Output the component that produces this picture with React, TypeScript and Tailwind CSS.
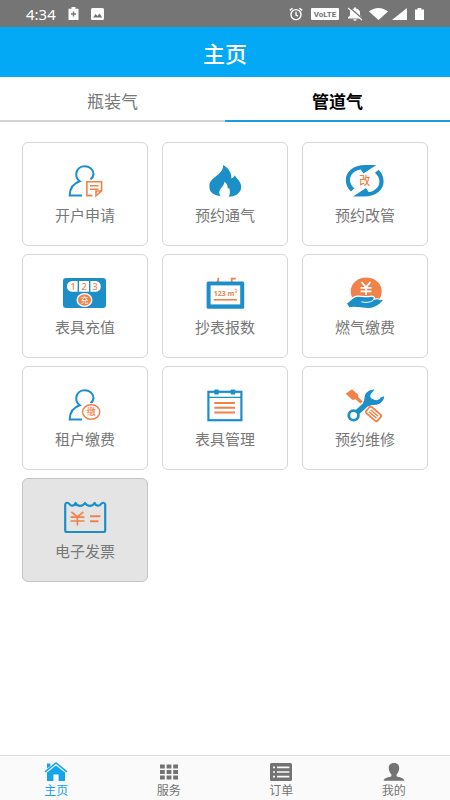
import { useState } from "react";
import type { ReactNode } from "react";

const BLUE = "#1c8fc9";
const ORANGE = "#f0824a";
const CJK = '"Noto Sans CJK SC", sans-serif';

function Icon({ children }: { children: ReactNode }) {
   return (
      <svg viewBox="0 0 48 36" className="h-9 w-12" fill="none" aria-hidden="true">
         {children}
      </svg>
   );
}

function Person() {
   return (
      <path
         d="M21 32.5H8.7C8.8 25 12 20.5 18.8 18.3C15.6 16.2 14.9 12.6 15.4 9.8C16.2 5.8 19.6 3.3 23.7 3.3C28.6 3.3 32.4 6.5 32.5 10.6C32.5 13 31.5 15 29.5 16.4"
         stroke={BLUE}
         strokeWidth="2"
      />
   );
}

function OpenAccountIcon() {
   return (
      <Icon>
         <Person />
         <path d="M31.5 32.6H25.9V18.8H40.6V28L35 32.8V28H40.4" stroke={ORANGE} strokeWidth="1.6" />
         <path d="M29 22.7H37.5M29 26.2H37.5" stroke={ORANGE} strokeWidth="1.4" />
      </Icon>
   );
}

function FlameIcon() {
   return (
      <Icon>
         <path
            d="M22 2C26.5 4.4 30.8 9 30.4 15.4C32 15 33.2 13.8 33.8 12.2C35.4 16 40.2 18 40.2 24C40.2 29.2 35.6 33.4 28 33.8C8 33.8 8.4 26 8.4 22.7C8.4 14 22.8 12 22 2Z"
            fill={BLUE}
         />
         <path
            d="M23.4 18.8C26 20.8 27 23.4 26.8 25.8L28.2 25C29.4 28.4 29.2 31.4 27.4 34.4H20.4C18.8 32.8 18 30.8 18.4 28.6C18.8 25.4 23.4 22.8 23.4 18.8Z"
            fill="#fff"
         />
      </Icon>
   );
}

function ChangePipeIcon() {
   const arrow = "M35.4 2H24.4C12 2 4.8 8.8 4.8 17C4.8 21.6 6.6 25.4 9.8 28.6L13.4 25.6C10.6 23 9 20.2 9 17C9 11.4 13.4 7.2 19.8 6.4L22.4 10.4Z";
   return (
      <Icon>
         <path d={arrow} fill={BLUE} />
         <path d={arrow} fill={BLUE} transform="rotate(180 23.7 17.7)" />
         <text x="23.7" y="21.8" textAnchor="middle" fontSize="11" fontWeight="500" fill={ORANGE} fontFamily={CJK}>改</text>
      </Icon>
   );
}

function MeterTopUpIcon() {
   return (
      <Icon>
         <rect x="2" y="3" width="43" height="30" rx="3" fill={BLUE} />
         <path d="M11.3 6H16.6V16.8H11.3A5.4 5.4 0 0 1 11.3 6ZM18 6H28V16.8H18ZM29.4 6H34.4A5.4 5.4 0 0 1 34.4 16.8H29.4Z" fill="#fff" />
         <g fill={ORANGE} fontFamily='"Noto Sans", sans-serif' fontSize="9" fontWeight="500" textAnchor="middle">
            <text x="12" y="14.6">1</text>
            <text x="23" y="14.6">2</text>
            <text x="34" y="14.6">3</text>
         </g>
         <ellipse cx="23.5" cy="25" rx="8" ry="7" fill="#fff" />
         <ellipse cx="23.5" cy="25" rx="6.6" ry="5.7" fill={ORANGE} />
         <text x="23.5" y="28.1" textAnchor="middle" fontSize="8" fill="#fff" fontFamily={CJK}>充</text>
      </Icon>
   );
}

function ReadingIcon() {
   return (
      <Icon>
         <path d="M15.7 6.5H17.3V2.7M30.7 7V3.6H34.8" stroke={ORANGE} strokeWidth="1.8" />
         <rect x="5.6" y="6.4" width="37.6" height="27.4" rx="1.5" fill={BLUE} />
         <rect x="9.6" y="10.4" width="29.6" height="19" fill="#fff" />
         <text x="24.4" y="21" textAnchor="middle" fontSize="7" fontWeight="700" fill={ORANGE} fontFamily='"Noto Sans", sans-serif'>123 m³</text>
         <path d="M12.7 24.8H36" stroke={ORANGE} strokeWidth="1.6" />
      </Icon>
   );
}

function GasPayIcon() {
   return (
      <Icon>
         <ellipse cx="25.2" cy="16.4" rx="15.5" ry="14" fill={ORANGE} />
         <path d="M20.5 7L25 12.3L29.5 7M19.5 12.8H30.5M19.5 16.4H30.5M25 12V20" stroke="#fff" strokeWidth="1.8" />
         <path
            d="M5.2 28.2C9 26.6 11 21.2 16.8 21.2C21 21.2 25 22.2 29 21.3C32 20.7 34.2 22 33 24.2C36 23.4 38 23.8 39 24.6C40.8 23.8 43 24.4 42.2 26C38 30.6 34 33.6 28 33.6C20 33.8 14.6 31 8 33Z"
            fill={BLUE}
            stroke="#fff"
            strokeWidth="1.2"
         />
         <path d="M20.5 26.8C25 28 31 27.4 33.2 24.2" stroke="#fff" strokeWidth="1" />
      </Icon>
   );
}

function TenantPayIcon() {
   return (
      <Icon>
         <Person />
         <ellipse cx="30.2" cy="25" rx="10.2" ry="8.8" fill="#fff" />
         <ellipse cx="30.2" cy="25" rx="8.6" ry="7.2" stroke={ORANGE} strokeWidth="1.4" />
         <text x="30.2" y="28.3" textAnchor="middle" fontSize="9" fontWeight="500" fill={ORANGE} fontFamily={CJK}>缴</text>
      </Icon>
   );
}

function MeterManageIcon() {
   return (
      <Icon>
         <rect x="7.4" y="4.8" width="33" height="28.4" stroke={BLUE} strokeWidth="2.2" />
         <path d="M7 10.4H41" stroke={BLUE} strokeWidth="1.2" />
         <rect x="13.2" y="2.6" width="4.6" height="5" rx="1" fill={BLUE} />
         <rect x="29.6" y="2.6" width="4.6" height="5" rx="1" fill={BLUE} />
         <path d="M13.3 16H34M13.3 20.8H34M13.3 25.6H34" stroke={ORANGE} strokeWidth="2" />
      </Icon>
   );
}

function RepairIcon() {
   return (
      <Icon>
         <path d="M4.6 6.8L11 2.2L17.6 8L17 10L21.8 14.4L19.4 16.4L14.4 12.2L11.6 13Z" fill={ORANGE} />
         <path d="M16 25.4L27 15.4" stroke={BLUE} strokeWidth="5.4" />
         <circle cx="12.6" cy="28.4" r="4.8" stroke={BLUE} strokeWidth="2.8" />
         <path
            d="M33.6 2.4C28.6 2.2 23.8 5.4 23.6 10C23.6 12 23.2 14 22 15.4L27.8 19.6C29 18.4 31 18 33 18C38.8 17.8 43.2 14 43.2 9.2L39.6 10.4C38.4 13 35.6 13.6 33.4 12.8C29.6 12 28.4 9.4 30 6.8Z"
            fill={BLUE}
         />
         <g transform="rotate(40 32.6 27)" stroke={ORANGE}>
            <rect x="25" y="22.9" width="15" height="8.2" rx="2" strokeWidth="1.8" />
            <path d="M27.5 25.8H37.5M27.5 28.3H37.5" strokeWidth="1.4" />
         </g>
      </Icon>
   );
}

function InvoiceIcon() {
   return (
      <Icon>
         <path
            d="M4.2 5.4C4.6 3.4 7 3.2 8.4 5C10 7.4 13.2 7.4 14.6 4C16.4 7.8 21.6 7.8 24 4C26.4 7.8 31.4 7.8 33.6 4C35 7.4 38.4 7.4 40 5C41.4 3.2 43.8 3.4 44.2 5.4V31.2Q44.2 33 42.4 33H6Q4.2 33 4.2 31.2Z"
            stroke={BLUE}
            strokeWidth="2.2"
            strokeLinejoin="round"
         />
         <path d="M10.4 12.8L16.4 18L22.4 12.8M9.5 18.2H23.5M9.5 22H23.5M16.4 17.5V26.4" stroke={ORANGE} strokeWidth="1.7" />
         <path d="M29 17.2H39.4M29 22.2H37.4" stroke={ORANGE} strokeWidth="2" />
      </Icon>
   );
}

const services = [
   { name: "开户申请", icon: <OpenAccountIcon /> },
   { name: "预约通气", icon: <FlameIcon /> },
   { name: "预约改管", icon: <ChangePipeIcon /> },
   { name: "表具充值", icon: <MeterTopUpIcon /> },
   { name: "抄表报数", icon: <ReadingIcon /> },
   { name: "燃气缴费", icon: <GasPayIcon /> },
   { name: "租户缴费", icon: <TenantPayIcon /> },
   { name: "表具管理", icon: <MeterManageIcon /> },
   { name: "预约维修", icon: <RepairIcon /> },
   { name: "电子发票", icon: <InvoiceIcon />, pressed: true },
];

const navItems = [
   {
      name: "主页",
      icon: (
         <>
            <path d="M1 9.8L12 1L23 9.8" stroke="currentColor" strokeWidth="1.6" fill="none" />
            <path d="M3 1.6H6.4V4L3 6.6ZM12 3.4L21 10.6V19H14.6V12.6H9.4V19H3V10.6Z" />
         </>
      ),
   },
   {
      name: "服务",
      icon: (
         <path d="M3 2.4H7.8V6.4H3ZM9.6 2.4H14.4V6.4H9.6ZM16.2 2.4H21V6.4H16.2ZM3 8H7.8V12H3ZM9.6 8H14.4V12H9.6ZM16.2 8H21V12H16.2ZM3 13.6H7.8V17.6H3ZM9.6 13.6H14.4V17.6H9.6ZM16.2 13.6H21V17.6H16.2Z" />
      ),
   },
   {
      name: "订单",
      icon: (
         <>
            <rect x="1" y="1" width="22" height="18" rx="1.5" />
            <path d="M4 5.4H6M8 5.4H20.4M4 10H6M8 10H20.4M4 14.6H6M8 14.6H20.4" stroke="#fafafa" strokeWidth="1.6" />
         </>
      ),
   },
   {
      name: "我的",
      icon: (
         <path d="M12 1C15.8 1 17.4 3.2 17.2 6.6C17 9 16 11 14.6 12.4V14.2C17 15.4 22 15.2 22.4 18.8H1.6C2 15.2 7 15.4 9.4 14.2V12.4C8 11 7 9 6.8 6.6C6.6 3.2 8.2 1 12 1Z" />
      ),
   },
];

function StatusBar() {
   return (
      <div className="h-[27px] shrink-0 bg-[#757575] text-white flex items-center justify-between px-[26px]">
         <div className="flex items-center gap-3">
            <span className="font-['Noto_Sans'] text-[15px] leading-5">4:34</span>
            <svg width="11" height="13" viewBox="0 0 10 13" fill="currentColor">
               <path d="M0 1.8H3V0H7V1.8H10V13H0Z" />
               <path d="M5 4.6V9.4M2.5 7H7.5" stroke="#757575" strokeWidth="1.4" />
            </svg>
            <svg width="13" height="12" viewBox="0 0 13 12" fill="currentColor">
               <rect width="13" height="12" rx="1.5" />
               <path d="M2 9.5L4.6 6L6.4 8L8.6 5.6L11.2 9.5Z" fill="#757575" />
            </svg>
         </div>
         <div className="flex items-center">
            <svg width="14" height="14" viewBox="0 0 14 14" fill="none" stroke="currentColor" strokeWidth="1.4">
               <circle cx="7" cy="7.6" r="5" />
               <path d="M7 4.8V8L9 9.2M0.8 3.4L3.6 1.2M13.2 3.4L10.4 1.2" />
            </svg>
            <svg className="ml-2" width="28" height="12" viewBox="0 0 28 12">
               <rect width="28" height="12" rx="1" fill="currentColor" />
               <text x="14" y="8.8" textAnchor="middle" fontSize="8" fontWeight="700" fill="#757575" fontFamily="Roboto, sans-serif">VoLTE</text>
            </svg>
            <svg className="ml-2" width="16" height="14" viewBox="0 0 16 14" fill="currentColor">
               <path d="M1 11.4V10.2L3 8.6V5.6C3 3.6 4.8 2 7 1.6V0.4H9V1.6C11.2 2 13 3.6 13 5.6V8.6L15 10.2V11.4ZM6.2 12.2H9.8Q9.6 13.8 8 13.8Q6.4 13.8 6.2 12.2Z" />
               <path d="M2 0L16 12.2" stroke="#757575" strokeWidth="1.4" />
               <path d="M1 1L15 13.2" stroke="currentColor" strokeWidth="1.1" />
            </svg>
            <svg className="ml-1.5" width="19" height="12" viewBox="0 0 19 12" fill="currentColor">
               <path d="M0 3.6C5.4 -1.2 13.6 -1.2 19 3.6L9.5 12Z" />
            </svg>
            <svg className="ml-1" width="15" height="12" viewBox="0 0 15 12" fill="currentColor">
               <path d="M15 0V12H0Z" />
            </svg>
            <svg className="ml-2" width="9" height="12" viewBox="0 0 9 12" fill="currentColor">
               <path d="M0 1.4H2.6V0H6.4V1.4H9V12H0Z" />
            </svg>
         </div>
      </div>
   );
}

export default function App() {
   const [tab, setTab] = useState("管道气");
   const [page, setPage] = useState("主页");

   return (
      <div className="min-h-screen flex flex-col bg-white font-['Noto_Sans_CJK_SC',sans-serif]">
         <StatusBar />
         <header className="h-[50px] shrink-0 bg-[#03a9f5] flex items-center justify-center">
            <h1 className="text-[22px] leading-8 font-medium text-white">主页</h1>
         </header>

         <div role="tablist" className="grid grid-cols-2 h-[45px] shrink-0">
            {["瓶装气", "管道气"].map((name) => (
               <button
                  key={name}
                  type="button"
                  role="tab"
                  aria-selected={tab === name}
                  onClick={() => setTab(name)}
                  className={
                     tab === name
                        ? "pt-1 border-b-2 border-[#1b9be0] text-[17px] leading-6 font-bold text-black"
                        : "pt-1 border-b-2 border-[#d4d4d4] text-[17px] leading-6 text-[#777]"
                  }
               >
                  {name}
               </button>
            ))}
         </div>

         <main className="grid grid-cols-3 gap-x-3.5 gap-y-2 px-[22px] pt-5 pb-6">
            {services.map((item) => (
               <button
                  key={item.name}
                  type="button"
                  className={
                     item.pressed
                        ? "h-26 flex flex-col items-center gap-1.5 pt-5 rounded-md border border-[#c4c4c4] bg-[#e4e4e4]"
                        : "h-26 flex flex-col items-center gap-1.5 pt-5 rounded-md border border-[#d6d6d6] bg-white"
                  }
               >
                  {item.icon}
                  <span className="text-[15px] leading-5 text-[#777]">{item.name}</span>
               </button>
            ))}
         </main>

         <nav className="mt-auto grid grid-cols-4 h-[45px] shrink-0 border-t border-[#dcdcdc] bg-[#fafafa]">
            {navItems.map((item) => (
               <button
                  key={item.name}
                  type="button"
                  onClick={() => setPage(item.name)}
                  className={
                     page === item.name
                        ? "flex flex-col items-center pt-1.5 text-[#12a5ee]"
                        : "flex flex-col items-center pt-1.5 text-[#737373]"
                  }
               >
                  <svg viewBox="0 0 24 20" className="h-5 w-6" fill="currentColor" aria-hidden="true">
                     {item.icon}
                  </svg>
                  <span className="text-xs leading-4">{item.name}</span>
               </button>
            ))}
         </nav>
      </div>
   );
}
